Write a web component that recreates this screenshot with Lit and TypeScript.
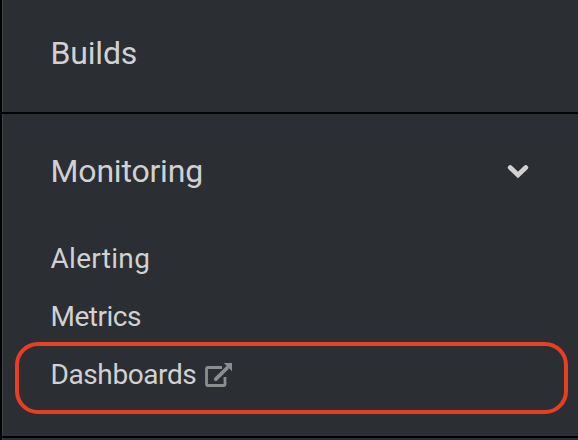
import { LitElement, html, css } from "lit";
import { customElement } from "lit/decorators.js";

@customElement("app-root")
export class AppRoot extends LitElement {
  static styles = css`
    :host {
      display: block;
      height: 440px;
      box-sizing: border-box;
      overflow: hidden;
      background: #2b2e33;
      border-left: 2px solid #030303;
      color: #d1d1d1;
      font-family: Roboto, "Liberation Sans", sans-serif;
    }
    nav {
      box-sizing: border-box;
      height: 440px;
      box-shadow: inset 1px 0 #3f4247;
    }
    .section {
      box-sizing: border-box;
      border-bottom: 2px solid #030303;
    }
    .builds {
      height: 114px;
    }
    .monitoring {
      height: 324px;
    }
    .heading {
      display: flex;
      align-items: center;
      justify-content: space-between;
      box-sizing: border-box;
      padding: 0 49px 0 48.6px;
      font-size: 32px;
      line-height: 40px;
      letter-spacing: -0.2px;
    }
    .builds .heading {
      height: 105px;
    }
    .monitoring .heading {
      height: 114px;
      margin-bottom: 1px;
    }
    .alerting {
      letter-spacing: 0.3px;
    }
    .metrics {
      letter-spacing: -0.5px;
    }
    .dashboards {
      letter-spacing: -0.4px;
    }
    .chevron {
      display: block;
      width: 22px;
      height: 16px;
    }
    ul {
      list-style: none;
      margin: 0;
      padding: 0;
      font-size: 28px;
    }
    li {
      display: flex;
      align-items: center;
      box-sizing: border-box;
      height: 58px;
      padding-left: 48.5px;
    }
    .marked {
      height: 72px;
      margin: -3px 10px 0 13px;
      padding: 0 0 7px 31.5px;
      border: 4px solid #ea3e23;
      border-radius: 23px;
    }
    .external {
      display: block;
      width: 28px;
      height: 25px;
      margin: 2px 0 0 8.2px;
    }
  `;

  render() {
    return html`
      <nav>
        <div class="section builds">
          <div class="heading"><span>Builds</span></div>
        </div>
        <div class="section monitoring">
          <div class="heading">
            <span>Monitoring</span>
            <svg class="chevron" viewBox="0 0 22 16" fill="none">
              <path
                d="M3.2 4.6 L11 12 L18.8 4.6"
                stroke="#d1d1d1"
                stroke-width="4.8"
                stroke-linecap="round"
              />
            </svg>
          </div>
          <ul>
            <li><span class="alerting">Alerting</span></li>
            <li><span class="metrics">Metrics</span></li>
            <li class="marked">
              <span class="dashboards">Dashboards</span>
              <svg class="external" viewBox="0 0 28 25">
                <path
                  d="M17 4.5 H3 Q1.5 4.5 1.5 6 V21 Q1.5 22.5 3 22.5 H18.5 Q20 22.5 20 21 V14"
                  fill="none"
                  stroke="#8b8d8f"
                  stroke-width="2.8"
                />
                <path
                  d="M10.8 16.2 L22 5"
                  fill="none"
                  stroke="#8b8d8f"
                  stroke-width="3.8"
                  stroke-linecap="round"
                />
                <path d="M18.8 0 H27 V8.2 Z" fill="#8b8d8f" />
              </svg>
            </li>
          </ul>
        </div>
      </nav>
    `;
  }
}
